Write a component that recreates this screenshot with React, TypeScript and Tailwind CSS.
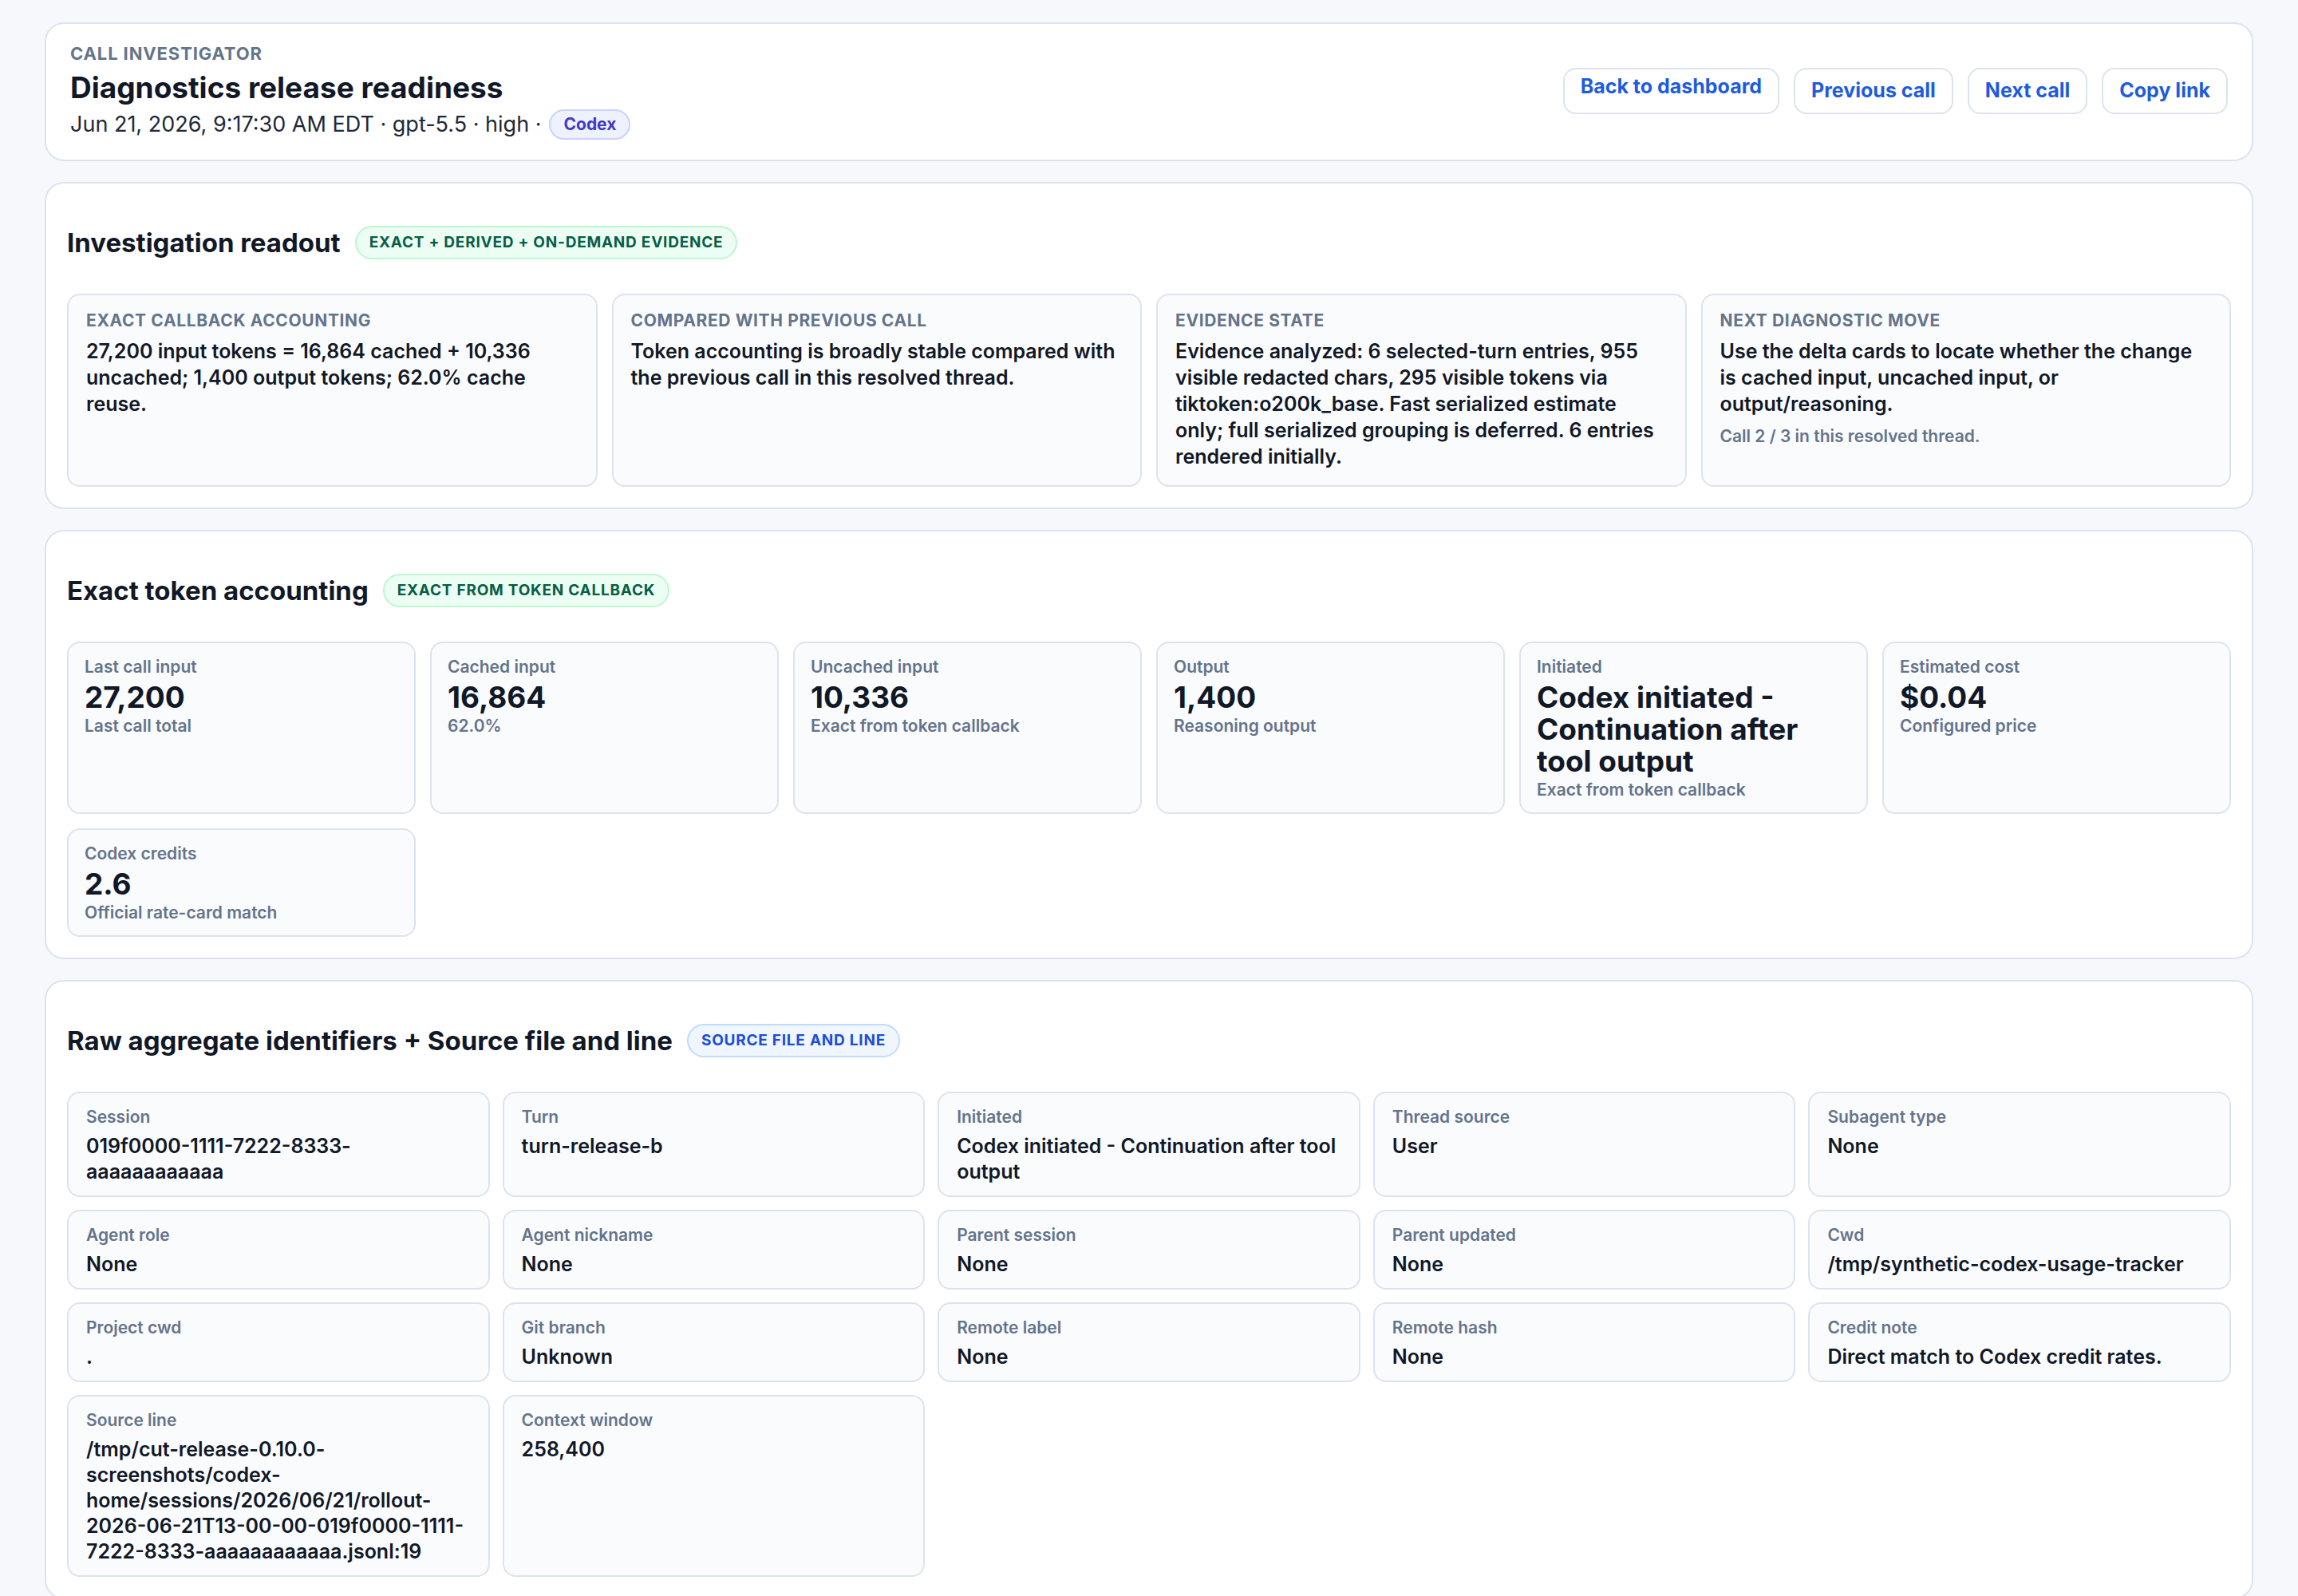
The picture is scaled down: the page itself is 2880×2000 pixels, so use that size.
import React from "react";

const readout = [
  {
    label: "Exact callback accounting",
    body: "27,200 input tokens = 16,864 cached + 10,336 uncached; 1,400 output tokens; 62.0% cache reuse.",
  },
  {
    label: "Compared with previous call",
    body: "Token accounting is broadly stable compared with the previous call in this resolved thread.",
  },
  {
    label: "Evidence state",
    body: "Evidence analyzed: 6 selected-turn entries, 955 visible redacted chars, 295 visible tokens via tiktoken:o200k_base. Fast serialized estimate only; full serialized grouping is deferred. 6 entries rendered initially.",
  },
  {
    label: "Next diagnostic move",
    body: "Use the delta cards to locate whether the change is cached input, uncached input, or output/reasoning.",
    note: "Call 2 / 3 in this resolved thread.",
  },
];

const tokens = [
  { label: "Last call input", value: "27,200", sub: "Last call total" },
  { label: "Cached input", value: "16,864", sub: "62.0%" },
  { label: "Uncached input", value: "10,336", sub: "Exact from token callback" },
  { label: "Output", value: "1,400", sub: "Reasoning output" },
  { label: "Initiated", value: "Codex initiated - Continuation after tool output", sub: "Exact from token callback" },
  { label: "Estimated cost", value: "$0.04", sub: "Configured price" },
  { label: "Codex credits", value: "2.6", sub: "Official rate-card match" },
];

const ids = [
  ["Session", "019f0000-1111-7222-8333-aaaaaaaaaaaa"],
  ["Turn", "turn-release-b"],
  ["Initiated", "Codex initiated - Continuation after tool output"],
  ["Thread source", "User"],
  ["Subagent type", "None"],
  ["Agent role", "None"],
  ["Agent nickname", "None"],
  ["Parent session", "None"],
  ["Parent updated", "None"],
  ["Cwd", "/tmp/synthetic-codex-usage-tracker"],
  ["Project cwd", "."],
  ["Git branch", "Unknown"],
  ["Remote label", "None"],
  ["Remote hash", "None"],
  ["Credit note", "Direct match to Codex credit rates."],
  ["Source line", "/tmp/cut-release-0.10.0-screenshots/codex-home/sessions/2026/06/21/rollout-2026-06-21T13-00-00-019f0000-1111-7222-8333-aaaaaaaaaaaa.jsonl:19"],
  ["Context window", "258,400"],
];

const Section = ({ title, badge, badgeClass, children }: { title: string; badge: string; badgeClass: string; children: React.ReactNode }) => (
  <section className="rounded-xl border border-[#dde3ee] bg-white px-[13px] pb-[13px] pt-[26px]">
    <div className="mb-[21px] flex items-center gap-[9px]">
      <h2 className="text-[16.5px] font-bold leading-[22px] text-[#111827]">{title}</h2>
      <span className={`rounded-full border px-2 py-[3px] text-[9.5px] font-bold uppercase leading-[13px] tracking-[0.04em] ${badgeClass}`}>{badge}</span>
    </div>
    {children}
  </section>
);

export default function App() {
  return (
    <div className="[zoom:2] min-h-[1000px] w-[1440px] bg-[#f6f8fb] px-[28px] pb-[12px] pt-[14px] font-[Inter,sans-serif] text-[#111827]">
      <div className="flex flex-col gap-[13px]">
        <header className="flex items-center justify-between rounded-xl border border-[#dde3ee] bg-white px-[15px] pb-[12px] pt-[11px]">
          <div>
            <div className="text-[11px] font-bold uppercase leading-[15px] tracking-[0.04em] text-[#64748b]">Call investigator</div>
            <h1 className="mt-[2px] text-[18.5px] font-bold leading-[24px] text-[#111827]">Diagnostics release readiness</h1>
            <div className="mt-[1px] flex items-center gap-[5px] text-[13.5px] leading-[20px] text-[#1f2937]">
              <span>Jun 21, 2026, 9:17:30 AM EDT · gpt-5.5 · high ·</span>
              <span className="rounded-full border border-[#c7d2fe] bg-[#eef2ff] px-[8px] py-[1px] text-[10.5px] font-bold leading-[15px] text-[#4338ca]">Codex</span>
            </div>
          </div>
          <div className="flex items-center gap-[9px] text-[12.5px] font-bold text-[#1d5be0]">
            <button className="h-[29px] rounded-lg border border-[#dde3ee] bg-white px-[10px] pb-[5px]">Back to dashboard</button>
            <button className="h-[29px] rounded-lg border border-[#dde3ee] bg-white px-[10px]">Previous call</button>
            <button className="h-[29px] rounded-lg border border-[#dde3ee] bg-white px-[10px]">Next call</button>
            <button className="h-[29px] rounded-lg border border-[#dde3ee] bg-white px-[10px]">Copy link</button>
          </div>
        </header>

        <Section title="Investigation readout" badge="Exact + derived + on-demand evidence" badgeClass="border-[#bbf7d0] bg-[#ecfdf3] text-[#065f46]">
          <div className="grid grid-cols-4 gap-[9px]">
            {readout.map((r) => (
              <div key={r.label} className="h-[121px] rounded-lg border border-[#dde3ee] bg-[#fafbfd] px-[11px] py-[9px]">
                <div className="text-[10.5px] font-bold uppercase leading-[14px] tracking-[0.03em] text-[#64748b]">{r.label}</div>
                <p className="mt-[4px] text-[12.5px] font-semibold leading-[16.5px] text-[#111827]">{r.body}</p>
                {r.note && <p className="mt-[4px] text-[10.5px] font-semibold text-[#64748b]">{r.note}</p>}
              </div>
            ))}
          </div>
        </Section>

        <Section title="Exact token accounting" badge="Exact from token callback" badgeClass="border-[#bbf7d0] bg-[#ecfdf3] text-[#065f46]">
          <div className="grid grid-cols-6 gap-[9px]">
            {tokens.map((t, i) => (
              <div key={t.label} className={`${i < 6 ? "min-h-[105px]" : ""} rounded-lg border border-[#dde3ee] bg-[#fafbfd] px-[10px] pb-[7px] pt-[8px]`}>
                <div className="text-[10.5px] font-semibold leading-[14px] text-[#64748b]">{t.label}</div>
                <div className="mt-[2px] text-[18.5px] font-bold leading-[20px] text-[#111827]">{t.value}</div>
                <div className="mt-[1px] text-[10.5px] font-semibold leading-[14px] text-[#64748b]">{t.sub}</div>
              </div>
            ))}
          </div>
        </Section>

        <Section title="Raw aggregate identifiers + Source file and line" badge="Source file and line" badgeClass="border-[#bfdbfe] bg-[#eff6ff] text-[#1d4ed8]">
          <div className="grid grid-cols-5 gap-[8px]">
            {ids.map(([k, v]) => (
              <div key={k} className="break-words rounded-lg border border-[#dde3ee] bg-[#fafbfd] px-[11px] pb-[7px] pt-[8px]">
                <div className="text-[10.5px] font-semibold leading-[14px] text-[#64748b]">{k}</div>
                <div className="mt-[3px] text-[12.5px] font-semibold leading-[16px] text-[#111827]">{v}</div>
              </div>
            ))}
          </div>
        </Section>
      </div>
    </div>
  );
}
